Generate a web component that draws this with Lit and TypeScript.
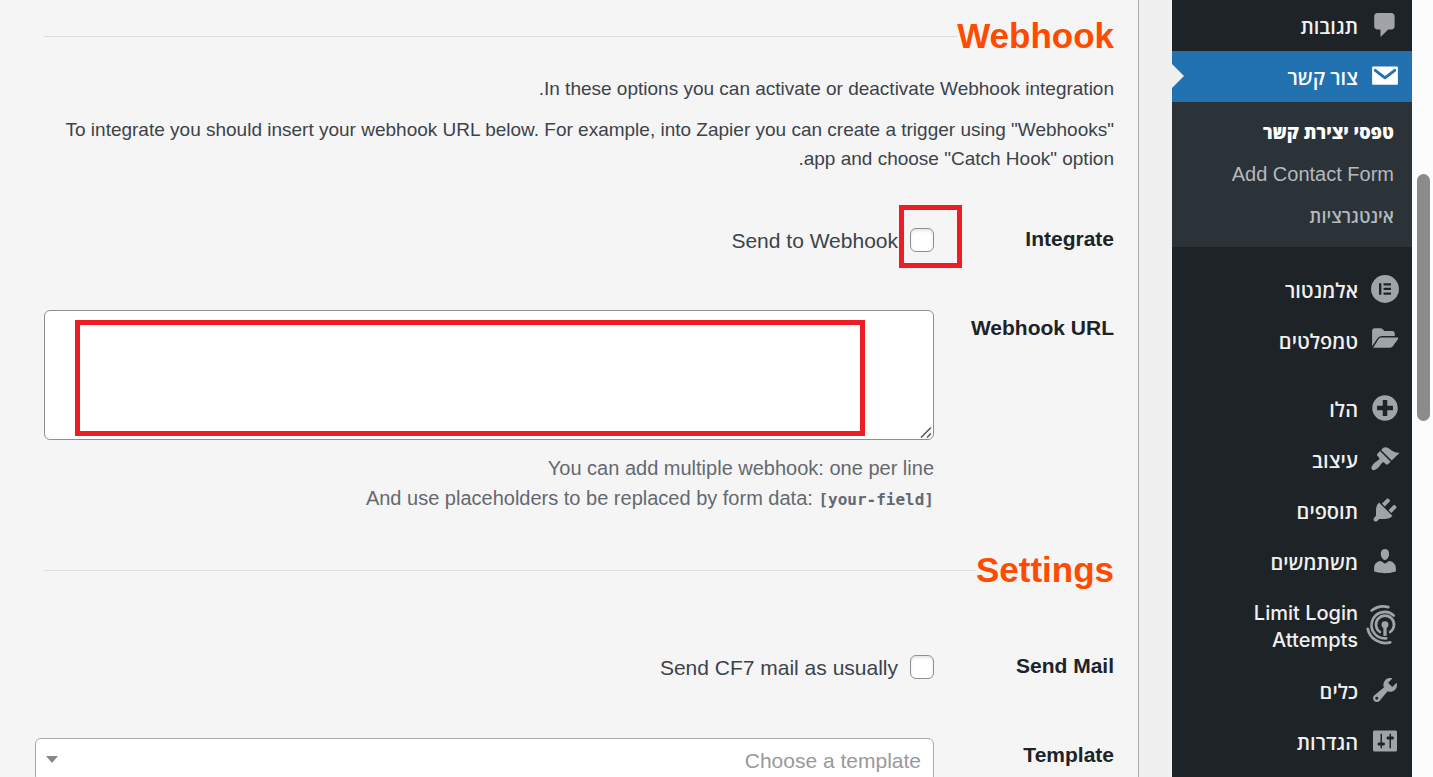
import { LitElement, html, css, svg } from "lit";
import { customElement } from "lit/decorators.js";

type IconName =
  | "comments" | "mail" | "elementor" | "folder" | "plus"
  | "brush" | "plug" | "user" | "shield" | "wrench" | "sliders";

const ICONS: Record<IconName, unknown> = {
  comments: svg`<path d="M4.900 2h9.400q.85 0 1.470.59T16.400 4v7q0 .82-.62 1.410T14.300 13h-2.100l-5.200 5v-5H4.900q-.85 0-1.470-.59T2.800 11V4q0-.82.62-1.410T4.900 2z"/>`,
  mail: svg`<rect x="1.4" y="3.700" width="17.2" height="12.200" rx=".8"/><path d="M3.500 6.200 10 11.200l6.500-5" fill="none" stroke="#2271b1" stroke-width="1.900" stroke-linecap="round" stroke-linejoin="round"/>`,
  elementor: svg`<path fill-rule="evenodd" d="M10 .7a9.3 9.3 0 1 0 0 18.6 9.3 9.3 0 0 0 0-18.6zM6 6.2h1.6v7.6H6zM9 6.2h5v1.5H9zM9 9.2h5v1.5H9zM9 12.3h5v1.5H9z"/>`,
  folder: svg`<path d="M1.4 14.200V3.800c0-1 .7-1.700 1.700-1.700h3.800c.6 0 1 .2 1.400.6l1.300 1.300h5.200c1 0 1.700.7 1.700 1.700v1.600H8c-1.300 0-2.400.6-3.100 1.700z"/><path d="M2.100 15.100 5.600 9.500c.4-.7 1.200-1.100 2-1.100h10.700c.5 0 .7.5.4.9l-3.500 4.900c-.4.6-1 .9-1.700.9z"/>`,
  plus: svg`<path fill-rule="evenodd" d="M10 1.500a8.500 8.500 0 1 0 0 17 8.500 8.500 0 0 0 0-17zM8.500 4.700h3v3.800h3.800v3h-3.800v3.800h-3v-3.800H4.700v-3h3.800z"/>`,
  brush: svg`<path d="M14.48 11.06L7.41 3.99l1.5-1.5c.5-.56 2.3-.47 3.51.32 1.21.8 1.43 1.28 2.91 2.1 1.18.64 2.45 1.26 4.45.85zm-.71.71L6.7 4.7 4.93 6.47c-.39.39-.39 1.02 0 1.41l1.06 1.06c.39.39.39 1.03 0 1.42-.6.6-1.43 1.11-2.21 1.69-.35.26-.7.53-1.01.84C1.43 14.23.4 16.08 1.4 17.07c.99 1 2.84-.03 4.18-1.36.31-.31.58-.66.85-1.02.57-.78 1.08-1.61 1.69-2.21.39-.39 1.02-.39 1.41 0l1.06 1.06c.39.39 1.02.39 1.41 0z"/>`,
  plug: svg`<path d="M13.11 4.36L9.87 7.6 8 5.73l3.24-3.24c.35-.34 1.05-.2 1.56.32.52.51.66 1.21.31 1.55zm-8 1.77l.91-1.12 9.01 9.01-1.19.84c-.71.71-2.63 1.16-3.82 1.16H6.14L4.9 17.26c-.59.59-1.54.59-2.12 0-.59-.58-.59-1.53 0-2.12l1.24-1.24v-3.88c0-1.13.4-3.19 1.09-3.89zm7.26 3.97l3.24-3.24c.34-.35 1.04-.21 1.55.31.52.51.66 1.21.31 1.55l-3.24 3.25z"/>`,
  user: svg`<path d="M10 9.25c-2.27 0-2.73-3.44-2.73-3.44C7 4.02 7.82 2 9.97 2c2.16 0 2.98 2.02 2.71 3.81 0 0-.41 3.44-2.68 3.44zm0 2.57L12.72 10c2.39 0 4.52 2.33 4.52 4.53v2.49s-3.65 1.13-7.24 1.13c-3.65 0-7.24-1.13-7.24-1.13v-2.49c0-2.25 1.94-4.48 4.47-4.48z"/>`,
  shield: svg`<g fill="none" stroke="currentColor" stroke-width="1.800" stroke-linecap="round"><path d="M6.600 14a6 6 0 1 1 6.800 0"/><path d="M15.800 3A8.800 8.800 0 1 0 10.800 18.200"/><path d="M-1.500 11.900A12 12 0 0 0 13.500 20.900"/><path d="M1.100 -.3A13 13 0 0 1 12.200 -2.600"/></g><circle cx="10" cy="9.200" r="2.300"/><path d="M8.900 10h2.200v6.600H8.900z"/>`,
  wrench: svg`<path d="M16.68 9.77c-1.34 1.34-3.3 1.67-4.95.99l-5.41 6.52c-.99.99-2.59.99-3.58 0s-.99-2.59 0-3.57l6.52-5.42c-.68-1.65-.35-3.61.99-4.95 1.28-1.28 3.12-1.62 4.72-1.06l-2.89 2.89 2.82 2.82 2.86-2.87c.53 1.58.18 3.39-1.08 4.65zM3.81 16.21c.4.39 1.04.39 1.43 0 .4-.4.4-1.04 0-1.43-.39-.4-1.03-.4-1.43 0-.39.39-.39 1.03 0 1.43z"/>`,
  sliders: svg`<path d="M18 16V4c0-.55-.45-1-1-1H3c-.55 0-1 .45-1 1v12c0 .55.45 1 1 1h14c.55 0 1-.45 1-1zM8 11h1c.55 0 1 .45 1 1s-.45 1-1 1H8v1.500c0 .28-.22.5-.5.5s-.5-.22-.5-.5V13H6c-.55 0-1-.45-1-1s.45-1 1-1h1V5.500c0-.28.22-.5.5-.5s.5.22.5.5V11zm5-2h-1c-.55 0-1-.45-1-1s.45-1 1-1h1V5.500c0-.28.22-.5.5-.5s.5.22.5.5V7h1c.55 0 1 .45 1 1s-.45 1-1 1h-1v5.500c0 .28-.22.5-.5.5s-.5-.22-.5-.5V9z"/>`,
};

interface MenuItem {
  label: string;
  icon: IconName;
  children?: string[];
  startsGroup?: boolean;
}

const MENU: MenuItem[] = [
  { label: "תגובות", icon: "comments" },
  {
    label: "צור קשר",
    icon: "mail",
    children: ["טפסי יצירת קשר", "Add Contact Form", "אינטגרציות"],
  },
  { label: "אלמנטור", icon: "elementor", startsGroup: true },
  { label: "טמפלטים", icon: "folder" },
  { label: "הלו", icon: "plus", startsGroup: true },
  { label: "עיצוב", icon: "brush" },
  { label: "תוספים", icon: "plug" },
  { label: "משתמשים", icon: "user" },
  { label: "Limit Login Attempts", icon: "shield" },
  { label: "כלים", icon: "wrench" },
  { label: "הגדרות", icon: "sliders" },
];

@customElement("admin-menu")
export class AdminMenu extends LitElement {
  static styles = css`
    :host {
      display: block;
      background: #1d2327;
      color: #f0f0f1;
      direction: rtl;
      font-family: "Open Sans", "Liberation Sans", sans-serif;
      font-size: 20px;
      font-weight: 600;
    }
    .list,
    .sub {
      list-style: none;
      margin: 0;
      padding: 0;
    }
    .group {
      margin-top: 17px;
    }
    .item {
      display: flex;
      align-items: center;
      position: relative;
      gap: 12px;
      min-height: 51px;
      box-sizing: border-box;
      padding: 13px 12px 11px 48px;
      line-height: 27px;
      color: inherit;
      text-decoration: none;
    }
    .current {
      background: #2271b1;
      color: #fff;
    }
    .current::after {
      content: "";
      position: absolute;
      left: 0;
      top: 13px;
      border: 12px solid transparent;
      border-left-color: #f0f0f1;
      border-right-width: 0;
    }
    .icon {
      flex: none;
      width: 30px;
      height: 30px;
      margin: -3px 0 0;
      overflow: visible;
      fill: #a0a4a9;
      color: #a0a4a9;
    }
    .current .icon {
      fill: #fff;
    }
    .latin {
      font-family: Inter, "Liberation Sans", sans-serif;
      font-weight: 500;
    }
    .sub {
      background: #2c3338;
      padding: 9px 0 10px;
    }
    .subitem {
      display: block;
      padding: 0 18px;
      line-height: 42px;
      font-size: 18px;
      color: #b4b9be;
      text-decoration: none;
    }
    .sublatin {
      font-family: "Liberation Sans", Arial, sans-serif;
      font-size: 20px;
      font-weight: 400;
    }
    .selected {
      color: #fff;
      font-weight: 800;
    }
  `;

  render() {
    return html`<nav aria-label="ראשי">
      <ul class="list">
        ${MENU.map(
          (item) => html`<li class=${item.startsGroup ? "group" : ""}>
            <a href="#" class=${item.children ? "item current" : "item"}>
              <svg class="icon" viewBox="0 0 20 20" aria-hidden="true">${ICONS[item.icon]}</svg>
              <span class=${/^[A-Z]/.test(item.label) ? "latin" : ""}>${item.label}</span>
            </a>
            ${item.children
              ? html`<ul class="sub">
                  ${item.children.map(
                    (label, i) => html`<li>
                      <a
                        href="#"
                        class="subitem ${i === 0 ? "selected" : ""} ${/^[A-Z]/.test(label) ? "sublatin" : ""}"
                        >${label}</a
                      >
                    </li>`
                  )}
                </ul>`
              : ""}
          </li>`
        )}
      </ul>
    </nav>`;
  }
}

@customElement("app-root")
export class AppRoot extends LitElement {
  static styles = css`
    :host {
      display: grid;
      grid-template-columns: minmax(0, 1fr) 33px 240px 21px;
      height: 100vh;
      overflow: hidden;
      background: #f0f0f1;
      color: #3c434a;
      font-family: "Liberation Sans", Arial, sans-serif;
      font-size: 21px;
    }
    .panel {
      direction: rtl;
      background: #f5f5f5;
      border-right: 1px solid #a7aaad;
      padding: 16px 24px 0 35px;
      min-width: 0;
    }
    .menu {
      grid-column: 3;
    }
    .heading {
      display: flex;
      align-items: center;
      margin: 0 0 0 9px;
      color: #ff4b00;
      font-size: 35px;
      line-height: 40px;
      font-weight: 700;
    }
    .heading::after {
      content: "";
      flex: 1;
      height: 1px;
      background: #dcdcde;
    }
    .intro {
      margin: 18px 0 22px;
      font-size: 19px;
      line-height: 29px;
    }
    .intro p {
      margin: 0 0 12px;
    }
    .fields {
      display: grid;
      grid-template-columns: 180px minmax(0, 1fr);
    }
    .label {
      padding-top: 30px;
      min-height: 59px;
      line-height: 27px;
      font-weight: 700;
      color: #1d2327;
    }
    .cell {
      padding: 26px 0 0 9px;
    }
    .check {
      display: inline-flex;
      align-items: center;
      position: relative;
      gap: 12px;
      height: 40px;
    }
    .box {
      appearance: none;
      width: 24px;
      height: 24px;
      margin: 0 0 2px;
      border: 1px solid #8c8f94;
      border-radius: 6px;
      background: #fff;
      box-shadow: inset 0 2px 3px rgba(0, 0, 0, 0.1);
    }
    .mark {
      position: absolute;
      border: 5px solid #ee1c25;
      pointer-events: none;
    }
    .mark-check {
      top: -16px;
      right: -28px;
      width: 53px;
      height: 53px;
    }
    .mark-area {
      inset: 10px 69px 4px 31px;
    }
    .areawrap {
      position: relative;
      display: flex;
    }
    .area {
      width: 100%;
      height: 130px;
      box-sizing: border-box;
      margin: 0;
      padding: 3px 12px;
      border: 1px solid #8c8f94;
      border-radius: 6px;
      background: #fff;
      font: inherit;
      direction: ltr;
      resize: none;
    }
    .grip {
      position: absolute;
      right: 2px;
      bottom: 2px;
      width: 12px;
      height: 12px;
      fill: none;
      stroke: #50575e;
      stroke-width: 1.5;
      pointer-events: none;
    }
    .hint {
      margin: 13px 0 23px;
      font-size: 20px;
      line-height: 30px;
      color: #646970;
    }
    .hint code {
      font-family: "DejaVu Sans Mono", monospace;
      font-size: 16px;
      font-weight: 700;
    }
    .second {
      margin-top: 12px;
      margin-bottom: 32px;
    }
    .selectcell {
      padding-top: 27px;
    }
    .selectwrap {
      position: relative;
      display: flex;
    }
    .select {
      appearance: none;
      width: 100%;
      height: 44px;
      padding: 0 12px;
      border: 1px solid #a7aaad;
      border-radius: 6px;
      background: #fff;
      color: #999;
      font: inherit;
      direction: rtl;
    }
    .arrow {
      position: absolute;
      left: 11px;
      top: 18px;
      width: 12px;
      height: 7px;
      fill: #888;
      pointer-events: none;
    }
    .track {
      background: #fcfcfc;
      padding: 174px 3px 0 5px;
    }
    .thumb {
      height: 247px;
      border-radius: 7px;
      background: #8b8b8b;
    }
  `;

  render() {
    return html`
      <main class="panel">
        <h2 class="heading">Webhook</h2>
        <div class="intro">
          <p>In these options you can activate or deactivate Webhook integration.</p>
          <p>
            To integrate you should insert your webhook URL below. For example, into Zapier you can
            create a trigger using "Webhooks" app and choose "Catch Hook" option.
          </p>
        </div>
        <div class="fields">
          <label class="label" for="activate">Integrate</label>
          <div class="cell">
            <label class="check">
              <input class="box" type="checkbox" id="activate" />
              <span>Send to Webhook</span>
              <span class="mark mark-check"></span>
            </label>
          </div>
          <label class="label" for="url">Webhook URL</label>
          <div class="cell">
            <div class="areawrap">
              <textarea class="area" id="url"></textarea>
              <svg class="grip" viewBox="0 0 12 12" aria-hidden="true">
                <path d="M1 11.500 11 1.500M7 11.500 11 7.500" />
              </svg>
              <span class="mark mark-area"></span>
            </div>
            <p class="hint">
              You can add multiple webhook: one per line<br /><bdi dir="ltr"
                >And use placeholders to be replaced by form data: <code>[your-field]</code></bdi
              >
            </p>
          </div>
        </div>
        <h2 class="heading second">Settings</h2>
        <div class="fields">
          <label class="label" for="mail">Send Mail</label>
          <div class="cell">
            <label class="check">
              <input class="box" type="checkbox" id="mail" />
              <span>Send CF7 mail as usually</span>
            </label>
          </div>
          <label class="label" for="template">Template</label>
          <div class="selectcell">
            <div class="selectwrap">
              <select class="select" id="template">
                <option>Choose a template</option>
              </select>
              <svg class="arrow" viewBox="0 0 12 7" aria-hidden="true"><path d="M0 0h12L6 7z" /></svg>
            </div>
          </div>
        </div>
      </main>
      <admin-menu class="menu"></admin-menu>
      <div class="track" aria-hidden="true"><div class="thumb"></div></div>
    `;
  }
}
